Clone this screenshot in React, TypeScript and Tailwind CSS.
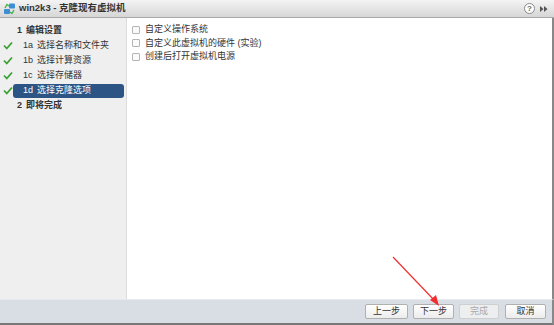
const font = { fontFamily: '"Liberation Sans", "Noto Sans CJK SC", sans-serif' };

function Check() {
  return (
    <svg width="10" height="9" viewBox="0 0 10 9" className="shrink-0">
      <path d="M1 4.5 L3.8 7.5 L9 1.5" fill="none" stroke="#3aa135" strokeWidth="1.8" />
    </svg>
  );
}

function Step({ num, label, done, active }: { num: string; label: string; done?: boolean; active?: boolean }) {
  return (
    <div className="flex h-[15px] items-center">
      <div className="flex w-[13px] justify-center pl-[2px]">{done && <Check />}</div>
      <div
        className={
          active
            ? "flex h-[14px] flex-1 items-center rounded-[3px] bg-[#2c5585] pl-[10px] text-white mr-[2px]"
            : "flex h-[14px] flex-1 items-center pl-[10px] text-[#333]"
        }
      >
        <span className="w-[14px]">{num}</span>
        <span>{label}</span>
      </div>
    </div>
  );
}

export default function App() {
  return (
    <div className="flex h-[325px] w-[554px] flex-col bg-white text-[9px]" style={font}>
      <div className="flex h-[18px] items-center border-b border-[#a9a9a9] bg-gradient-to-b from-[#f4f4f4] to-[#d6d6d6] pl-[3px] pr-[5px]">
        <svg width="13" height="12" viewBox="0 0 13 12">
          <rect x="6" y="0.5" width="6" height="5" rx="1" fill="#3c8fd6" />
          <rect x="1" y="6" width="6" height="5" rx="1" fill="#3c8fd6" />
          <path d="M2 5 L4 1.5 L6 3" fill="none" stroke="#4caf50" strokeWidth="1.4" />
          <path d="M11 7 L9 10.5 L7 9" fill="none" stroke="#4caf50" strokeWidth="1.4" />
        </svg>
        <span className="ml-[3px] text-[9.5px] font-bold text-[#333]">win2k3 - 克隆现有虚拟机</span>
        <div className="flex-1" />
        <div className="flex h-[11px] w-[11px] items-center justify-center rounded-full border border-[#888] bg-white text-[8px] font-bold text-[#666]">?</div>
        <svg width="10" height="8" viewBox="0 0 10 8" className="ml-[4px]">
          <path d="M1 1 L4.5 4 L1 7 Z M5 1 L8.5 4 L5 7 Z" fill="#555" />
        </svg>
      </div>
      <div className="flex flex-1 border-r-[2px] border-[#888]">
        <div className="flex w-[127px] flex-col border-r border-[#dcdcdc] bg-[#efefef] pt-[5px]">
          <div className="flex h-[15px] items-center pl-[17px] font-bold text-[#333]">
            <span className="w-[9px]">1</span>编辑设置
          </div>
          <Step num="1a" label="选择名称和文件夹" done />
          <Step num="1b" label="选择计算资源" done />
          <Step num="1c" label="选择存储器" done />
          <Step num="1d" label="选择克隆选项" done active />
          <div className="flex h-[15px] items-center pl-[17px] font-bold text-[#333]">
            <span className="w-[9px]">2</span>即将完成
          </div>
        </div>
        <div className="relative flex flex-1 flex-col pl-[5px] pt-[5px] text-[#333]">
          {["自定义操作系统", "自定义此虚拟机的硬件 (实验)", "创建后打开虚拟机电源"].map((t) => (
            <div key={t} className="flex h-[13.5px] items-center">
              <div className="mr-[5px] h-[8px] w-[8px] rounded-[1px] border border-[#b5b5b5] bg-[#fafafa]" />
              {t}
            </div>
          ))}
          <svg className="absolute left-[265px] top-[237px]" width="60" height="60" viewBox="0 0 60 60">
            <line x1="1" y1="2" x2="43" y2="46" stroke="#f03030" strokeWidth="1.2" />
            <path d="M47 51 L38 45 L44 40 Z" fill="#f03030" />
          </svg>
        </div>
      </div>
      <div className="flex h-[26px] items-center justify-end gap-[4px] border-t border-[#e6e9ee] border-b-[2px] border-b-[#777] border-r-[2px] border-r-[#888] bg-[#d9dee5] pr-[6px]">
        <button className="mr-[1px] h-[15px] w-[43px] rounded-[2px] border border-[#b0b0b0] bg-gradient-to-b from-white to-[#ececec] text-[9px] text-[#333]">上一步</button>
        <button className="h-[15px] w-[41px] rounded-[2px] border border-[#b0b0b0] bg-gradient-to-b from-white to-[#ececec] text-[9px] text-[#333]">下一步</button>
        <button className="ml-[1px] h-[15px] w-[40px] rounded-[2px] border border-[#cfcfcf] bg-[#eceef0] text-[9px] text-[#aaa]">完成</button>
        <button className="ml-[2px] h-[15px] w-[41px] rounded-[2px] border border-[#b0b0b0] bg-gradient-to-b from-white to-[#ececec] text-[9px] text-[#333]">取消</button>
      </div>
    </div>
  );
}
